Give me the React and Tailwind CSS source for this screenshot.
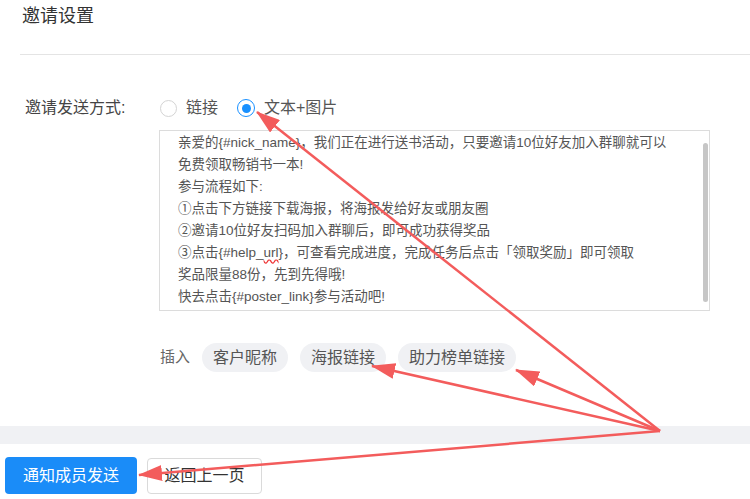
import React from "react";

// 邀请设置 form with red annotation arrows

const FONT = { fontFamily: '"Liberation Sans", "Noto Sans CJK SC", sans-serif' };

const messageLines = [
  "亲爱的{#nick_name}，我们正在进行送书活动，只要邀请10位好友加入群聊就可以",
  "免费领取畅销书一本!",
  "参与流程如下:",
  "①点击下方链接下载海报，将海报发给好友或朋友圈",
  "②邀请10位好友扫码加入群聊后，即可成功获得奖品",
  null,
  "奖品限量88份，先到先得哦!",
  "快去点击{#poster_link}参与活动吧!",
];

const Radio = ({ checked, label }) => (
  <label className="flex items-center">
    {checked ? (
      <span className="flex h-[18px] w-[18px] items-center justify-center rounded-full border-[1.5px] border-[#1890ff] bg-white">
        <span className="h-[9px] w-[9px] rounded-full bg-[#1890ff]" />
      </span>
    ) : (
      <span className="h-[17px] w-[17px] rounded-full border border-[#d4d4d4] bg-white" />
    )}
    <span className="ml-[9px] text-[16px] text-[#555]">{label}</span>
  </label>
);

const Chip = ({ text }) => (
  <span className="flex h-[29px] items-center rounded-full bg-[#f0f1f4] px-[11px] text-[16px] text-[#555]">
    {text}
  </span>
);

const Arrows = () => {
  const origin = [660, 431];
  const tips = [
    [257, 112],
    [372, 366],
    [516, 370],
    [139, 475],
  ];
  return (
    <svg
      className="pointer-events-none absolute left-0 top-0"
      width="750"
      height="499"
      viewBox="0 0 750 499"
    >
      <defs>
        <marker
          id="head"
          markerUnits="userSpaceOnUse"
          markerWidth="24"
          markerHeight="16"
          refX="23"
          refY="8"
          orient="auto"
        >
          <path d="M0,0 L24,8 L0,16 z" fill="#f35c5c" />
        </marker>
      </defs>
      {tips.map(([x, y], i) => (
        <line
          key={i}
          x1={origin[0]}
          y1={origin[1]}
          x2={x}
          y2={y}
          stroke="#f35c5c"
          strokeWidth="2.5"
          markerEnd="url(#head)"
        />
      ))}
    </svg>
  );
};

export default function App() {
  return (
    <div
      className="relative h-[499px] w-[750px] overflow-hidden bg-white"
      style={FONT}
    >
      {/* header */}
      <div className="pl-[22px] text-[18px] leading-[32px] text-[#333]">
        邀请设置
      </div>
      <div className="ml-[20px] mt-[22px] border-t border-[#e4e4e4]" />

      {/* send mode */}
      <div className="mt-[37px] flex h-[32px] items-center">
        <span className="w-[160px] pl-[25px] text-[16px] text-[#444]">
          邀请发送方式:
        </span>
        <Radio label="链接" />
        <div className="ml-[19px]">
          <Radio checked label="文本+图片" />
        </div>
      </div>

      {/* message box */}
      <div className="relative ml-[159px] mt-[6px] h-[181px] w-[551px] border border-[#dcdcdc] bg-white">
        <div className="pl-[18px] pt-[1px] text-[13.5px] leading-[22px] text-[#555]">
          {messageLines.map((line, i) =>
            line === null ? (
              <div key={i}>
                ③点击{"{#help_"}
                <span className="underline decoration-[#e33] decoration-wavy underline-offset-2">
                  url
                </span>
                {"}"}，可查看完成进度，完成任务后点击「领取奖励」即可领取
              </div>
            ) : (
              <div key={i} className="whitespace-nowrap">
                {line}
              </div>
            )
          )}
        </div>
        <div className="absolute right-[1px] top-[12px] h-[159px] w-[5px] rounded-full bg-[#c6c6c6]" />
      </div>

      {/* insert chips */}
      <div className="ml-[160px] mt-[32px] flex items-center gap-[12px]">
        <span className="text-[15px] text-[#666]">插入</span>
        <Chip text="客户昵称" />
        <Chip text="海报链接" />
        <Chip text="助力榜单链接" />
      </div>

      {/* band */}
      <div className="mt-[54px] h-[18px] bg-[#f0f1f4]" />

      {/* actions */}
      <div className="mt-[13px] flex items-center gap-[10px] pl-[5px]">
        <button className="flex h-[37px] w-[132px] items-center justify-center rounded-[4px] bg-[#1a8cf8] text-[16px] text-white">
          通知成员发送
        </button>
        <button className="flex h-[36px] w-[115px] items-center justify-center rounded-[4px] border border-[#dadada] bg-white text-[16px] text-[#333]">
          返回上一页
        </button>
      </div>

      <Arrows />
    </div>
  );
}
